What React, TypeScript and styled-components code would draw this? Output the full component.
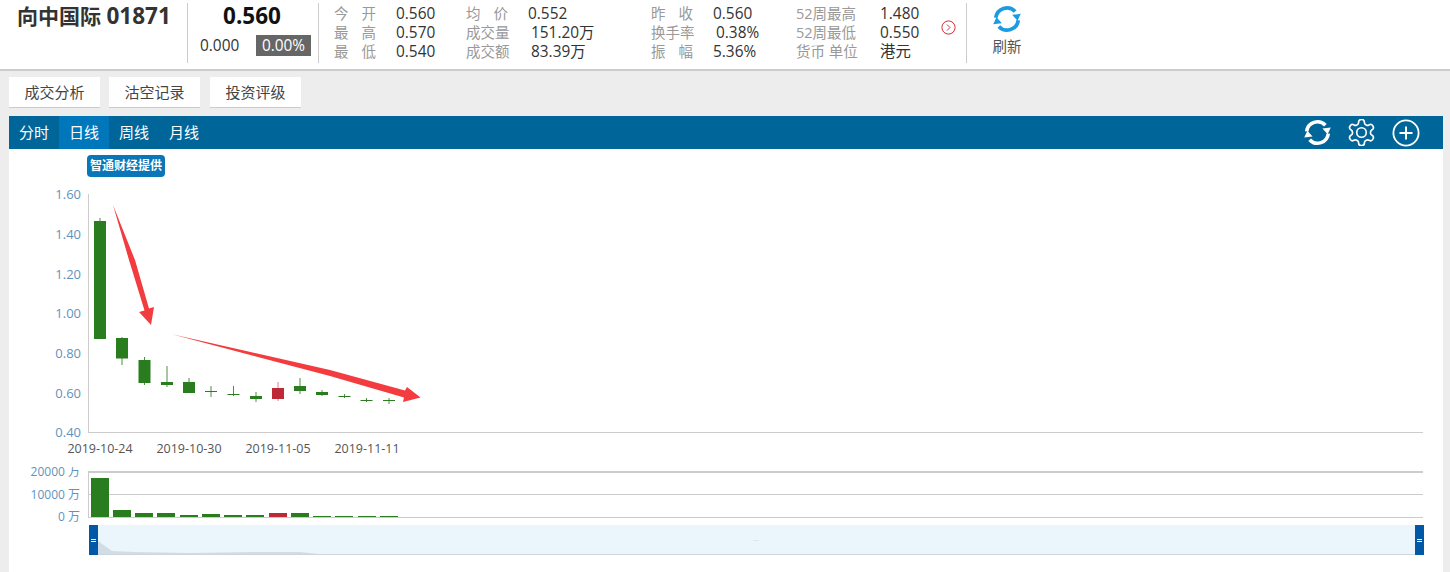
import React from "react";
import styled, { createGlobalStyle } from "styled-components";

const GlobalStyle = createGlobalStyle`
  html, body { margin: 0; padding: 0; background: #ededed; }
  body { font-family: "Open Sans", "Noto Sans CJK SC", sans-serif; overflow: hidden; }
  * { box-sizing: border-box; }
`;

const Page = styled.div`width: 1450px; height: 572px; overflow: hidden; background: #ededed;`;
const Header = styled.header`
  display: flex; height: 71px; padding-top: 3px; background: #fff; border-bottom: 2px solid #ccc;
`;
const TitleBlock = styled.div`width: 187px; padding-left: 17px;`;
const Title = styled.h1`margin: 0; font-size: 21px; line-height: 25px; font-weight: 700; color: #333; white-space: nowrap;`;
const StockCode = styled.span`font-size: 22.5px;`;
const Divider = styled.div`width: 1px; height: 60px; background: #ccc; flex: none;`;
const PriceBlock = styled.div`width: 130px; display: flex; flex-direction: column;`;
const Price = styled.div`font-size: 22.5px; line-height: 25px; font-weight: 700; color: #111; text-align: center; margin-left: -2px;`;
const ChangeRow = styled.div`display: flex; align-items: center; margin-top: 7px; padding-left: 12px; font-size: 15.4px; color: #333;`;
const ChangeValue = styled.span`width: 56px; line-height: 21px;`;
const ChangeBadge = styled.span`width: 55px; height: 21px; line-height: 21px; background: #666; color: #fff; text-align: center;`;
const Stats = styled.div`display: flex; padding: 1px 0 0 15px; width: 623px; flex: none;`;
const StatGroup = styled.div<{ $w: number; $label: number }>`
  width: ${(p) => p.$w}px; flex: none; display: grid;
  grid-template-columns: ${(p) => p.$label}px 1fr; grid-auto-rows: 19px;
  font-size: 15.4px; line-height: 19px; white-space: nowrap;
`;
const StatLabel = styled.span<{ $spread?: boolean }>`
  color: #999; font-size: 14.5px;
  ${(p) => p.$spread ? "width: 42px; text-align: justify; text-align-last: justify;" : ""}
`;
const StatValue = styled.span<{ $indent?: number }>`color: #333; padding-left: ${(p) => p.$indent || 0}px;`;
const MoreButton = styled.div`width: 25px; padding-top: 15px; color: #c8323c; flex: none; margin-left: -1px;`;
const RefreshBlock = styled.div`
  width: 80px; display: flex; flex-direction: column; align-items: center; color: #555;
  font-size: 14.5px; line-height: 20px; padding-top: 2px;
`;
const RefreshLabel = styled.span`margin-top: 4px;`;
const Tabs = styled.nav`display: flex; padding: 6px 0 0 9px; height: 45px;`;
const Tab = styled.button<{ $gap: number }>`
  width: 91px; height: 31px; margin-right: ${(p) => p.$gap}px; padding: 0 0 2px; border: 0;
  border-bottom: 1px solid #ccc; background: #fff; color: #444;
  font: 15px "Open Sans", "Noto Sans CJK SC", sans-serif;
`;
const Panel = styled.main`margin: 0 7px 0 9px; background: #fff; height: 456px; position: relative;`;
const Toolbar = styled.div`height: 33px; background: #006699; display: flex; align-items: stretch; color: #fff;`;
const Period = styled.div<{ $active?: boolean }>`
  width: 50px; text-align: center; line-height: 32px; font-size: 15px;
  background: ${(p) => (p.$active ? "#0077bb" : "transparent")};
`;
const ToolIcons = styled.div`margin-left: auto; display: flex; align-items: center; gap: 17px; padding-right: 23px;`;
const Badge = styled.div`
  position: absolute; left: 78px; top: 39px; width: 78px; height: 22px; border-radius: 4px;
  background: #0a76b8; color: #fff; font-size: 12px; font-weight: 700; line-height: 22px; text-align: center; white-space: nowrap;
`;
const Chart = styled.svg`display: block; width: 1434px; height: 423px;`;
const AxisLabel = styled.text`fill: #5f93bd; font-size: 13px; text-anchor: end;`;
const VolumeLabel = styled(AxisLabel)`font-size: 12px;`;
const DateLabel = styled.text`fill: #555; font-size: 12.5px; text-anchor: middle;`;

const RefreshIcon = ({ size, color }: { size: number; color: string }) => {
  const half = (
    <>
      <path d="M2.4 11 A9.6 9.6 0 0 1 19 5.6" fill="none" stroke={color} strokeWidth="3.2" />
      <polygon points="16.4,8.4 23.8,7.6 21,13.6" fill={color} />
    </>
  );
  return (
    <svg width={size} height={size} viewBox="0 0 24 24">
      {half}
      <g transform="rotate(180 12 12)">{half}</g>
    </svg>
  );
};

const GearIcon = () => (
  <svg width="27" height="27" viewBox="1.8 1.8 20.4 20.4" fill="none" stroke="#fff" strokeWidth="1.25" strokeLinejoin="round">
    <path d="M12.2 2.2h-.4a2 2 0 0 0-2 2v.2a2 2 0 0 1-1 1.7l-.4.2a2 2 0 0 1-2 0l-.2-.1a2 2 0 0 0-2.7.7l-.2.4a2 2 0 0 0 .7 2.7l.2.1a2 2 0 0 1 1 1.7v.5a2 2 0 0 1-1 1.7l-.2.1a2 2 0 0 0-.7 2.7l.2.4a2 2 0 0 0 2.7.7l.2-.1a2 2 0 0 1 2 0l.4.2a2 2 0 0 1 1 1.7v.2a2 2 0 0 0 2 2h.4a2 2 0 0 0 2-2v-.2a2 2 0 0 1 1-1.7l.4-.2a2 2 0 0 1 2 0l.2.1a2 2 0 0 0 2.7-.7l.2-.4a2 2 0 0 0-.7-2.7l-.2-.1a2 2 0 0 1-1-1.7v-.5a2 2 0 0 1 1-1.7l.2-.1a2 2 0 0 0 .7-2.7l-.2-.4a2 2 0 0 0-2.7-.7l-.2.1a2 2 0 0 1-2 0l-.4-.2a2 2 0 0 1-1-1.7v-.2a2 2 0 0 0-2-2z" />
    <circle cx="12" cy="12" r="3.6" />
  </svg>
);

const PlusIcon = () => (
  <svg width="28" height="28" viewBox="0 0 28 28" fill="none" stroke="#fff">
    <circle cx="14" cy="14" r="12.6" strokeWidth="1.8" />
    <path d="M14 7.5v13M7.5 14h13" strokeWidth="2" />
  </svg>
);

const MoreIcon = () => (
  <svg width="15" height="15" viewBox="0 0 15 15" fill="none" stroke="currentColor" strokeWidth="1">
    <circle cx="7.5" cy="7.5" r="6.6" />
    <path d="M6 4.5l3 3-3 3" />
  </svg>
);

const GREEN = "#2a7d1e";
const RED = "#bd2a35";
type Candle = { x: number; top: number; bottom: number; high: number; low: number; red?: boolean };
const candles: Candle[] = [
  { x: 100, top: 221, bottom: 339, high: 218, low: 339 },
  { x: 122, top: 338, bottom: 358.5, high: 337, low: 365 },
  { x: 144.5, top: 360, bottom: 383, high: 357, low: 385 },
  { x: 167, top: 382, bottom: 385, high: 366, low: 387 },
  { x: 189, top: 382, bottom: 393, high: 378, low: 393 },
  { x: 211, top: 391, bottom: 392, high: 386, low: 397 },
  { x: 233.5, top: 394, bottom: 395, high: 386, low: 396 },
  { x: 256, top: 396, bottom: 399, high: 392, low: 402 },
  { x: 278, top: 388, bottom: 399, high: 382, low: 401, red: true },
  { x: 300, top: 386, bottom: 391, high: 378, low: 394 },
  { x: 322, top: 392, bottom: 395, high: 390, low: 396 },
  { x: 344.5, top: 396, bottom: 397, high: 394, low: 398 },
  { x: 366.5, top: 400, bottom: 401, high: 398, low: 402 },
  { x: 389, top: 400, bottom: 401, high: 398, low: 404 },
];
const volumes = [
  [91, 478], [113, 510], [135, 513], [157, 513], [180, 515], [202, 514], [224, 515],
  [246, 515], [269, 513], [291, 513], [313, 516], [335, 516], [358, 516], [380, 516],
];
const yTicks: [string, number][] = [["1.60", 194], ["1.40", 234], ["1.20", 274], ["1.00", 313], ["0.80", 353], ["0.60", 392.5], ["0.40", 432]];
const dates: [string, number][] = [["2019-10-24", 100], ["2019-10-30", 189], ["2019-11-05", 278], ["2019-11-11", 367]];

const statGroups = [
  { w: 132, label: 62, rows: [["今开", "0.560", 0, true], ["最高", "0.570", 0, true], ["最低", "0.540", 0, true]] },
  { w: 185, label: 62, rows: [["均价", "0.552", 0, true], ["成交量", "151.20万", 3, false], ["成交额", "83.39万", 3, false]] },
  { w: 145, label: 62, rows: [["昨收", "0.560", 0, true], ["换手率", "0.38%", 3, false], ["振幅", "5.36%", 0, true]] },
  { w: 145, label: 84, rows: [["52周最高", "1.480", 0, false], ["52周最低", "0.550", 0, false], ["货币 单位", "港元", 0, false]] },
] as const;

export default function App() {
  return (
    <Page>
      <GlobalStyle />
      <Header>
        <TitleBlock><Title>向中国际 <StockCode>01871</StockCode></Title></TitleBlock>
        <Divider />
        <PriceBlock>
          <Price>0.560</Price>
          <ChangeRow>
            <ChangeValue>0.000</ChangeValue>
            <ChangeBadge>0.00%</ChangeBadge>
          </ChangeRow>
        </PriceBlock>
        <Divider />
        <Stats>
          {statGroups.map((g) => (
            <StatGroup key={g.rows[0][0]} $w={g.w} $label={g.label}>
              {g.rows.map((r) => (
                <React.Fragment key={r[0]}>
                  <StatLabel $spread={r[3]}>{r[3] ? `${r[0][0]} ${r[0][1]}` : r[0]}</StatLabel>
                  <StatValue $indent={r[2]}>{r[1]}</StatValue>
                </React.Fragment>
              ))}
            </StatGroup>
          ))}
        </Stats>
        <MoreButton><MoreIcon /></MoreButton>
        <Divider />
        <RefreshBlock>
          <RefreshIcon size={28} color="#1b9ce2" />
          <RefreshLabel>刷新</RefreshLabel>
        </RefreshBlock>
      </Header>
      <Tabs>
        <Tab $gap={9}>成交分析</Tab>
        <Tab $gap={10}>沽空记录</Tab>
        <Tab $gap={0}>投资评级</Tab>
      </Tabs>
      <Panel>
        <Toolbar>
          <Period>分时</Period>
          <Period $active>日线</Period>
          <Period>周线</Period>
          <Period>月线</Period>
          <ToolIcons>
            <RefreshIcon size={27} color="#fff" />
            <GearIcon />
            <PlusIcon />
          </ToolIcons>
        </Toolbar>
        <Badge>智通财经提供</Badge>
        <Chart viewBox="9 149 1434 423">
          <defs>
            <clipPath id="volume-top"><rect x="0" y="467" width="90" height="20" /></clipPath>
          </defs>
          <line x1="88.5" y1="194" x2="88.5" y2="432" stroke="#ccc" />
          <line x1="88" y1="432.5" x2="1423" y2="432.5" stroke="#ccc" />
          {yTicks.map(([t, y]) => <AxisLabel key={t} x="81" y={y + 5}>{t}</AxisLabel>)}
          {dates.map(([t, x]) => <DateLabel key={t} x={x} y="453">{t}</DateLabel>)}
          {candles.map((c) => {
            const col = c.red ? RED : GREEN;
            return (
              <g key={c.x}>
                <line x1={c.x} x2={c.x} y1={c.high} y2={c.low} stroke={col} strokeOpacity={c.red ? 0.6 : 0.85} />
                <rect x={c.x - 6} y={c.top} width="12" height={c.bottom - c.top} fill={col} />
              </g>
            );
          })}
          <polygon points="113,205 135,260 149,308.5 154,307 151,325 139,312 144.5,310.5 129,260" fill="#f23c3f" />
          <polygon points="172,334.3 330,370 405,390.5 407,387 420.5,397.5 403,402 404,397.5 330,376" fill="#f23c3f" />

          <rect x="88" y="471" width="1335" height="2" fill="#ccc" />
          <line x1="88" y1="494.5" x2="1423" y2="494.5" stroke="#ccc" />
          <line x1="88" y1="517.5" x2="1423" y2="517.5" stroke="#ccc" />
          <line x1="88.5" y1="472" x2="88.5" y2="517" stroke="#ccc" />
          <VolumeLabel x="80" y="476" clipPath="url(#volume-top)">20000 万</VolumeLabel>
          <VolumeLabel x="80" y="499">10000 万</VolumeLabel>
          <VolumeLabel x="80" y="521">0 万</VolumeLabel>
          {volumes.map(([x, y], i) => (
            <rect key={x} x={x} y={y} width="18" height={517 - y} fill={i === 8 ? RED : GREEN} />
          ))}

          <rect x="89" y="525" width="1335" height="30" fill="#eaf5fc" />
          <path d="M98 541 L112 551 L135 552 L190 553 L260 552 L300 552 L318 554 L1415 554 L1415 555 L98 555 Z" fill="#d0dde7" />
          <line x1="89" y1="554.5" x2="1424" y2="554.5" stroke="#ccd6dc" />
          <rect x="89" y="525" width="9" height="30" fill="#0058a6" />
          <rect x="1415" y="525" width="9" height="30" fill="#0058a6" />
          <path d="M91 539.5h5M91 541.5h5M1417 539.5h5M1417 541.5h5" stroke="#fff" strokeWidth="1" />
          <path d="M753 540.5h6" stroke="#dde8ee" />
        </Chart>
      </Panel>
    </Page>
  );
}
